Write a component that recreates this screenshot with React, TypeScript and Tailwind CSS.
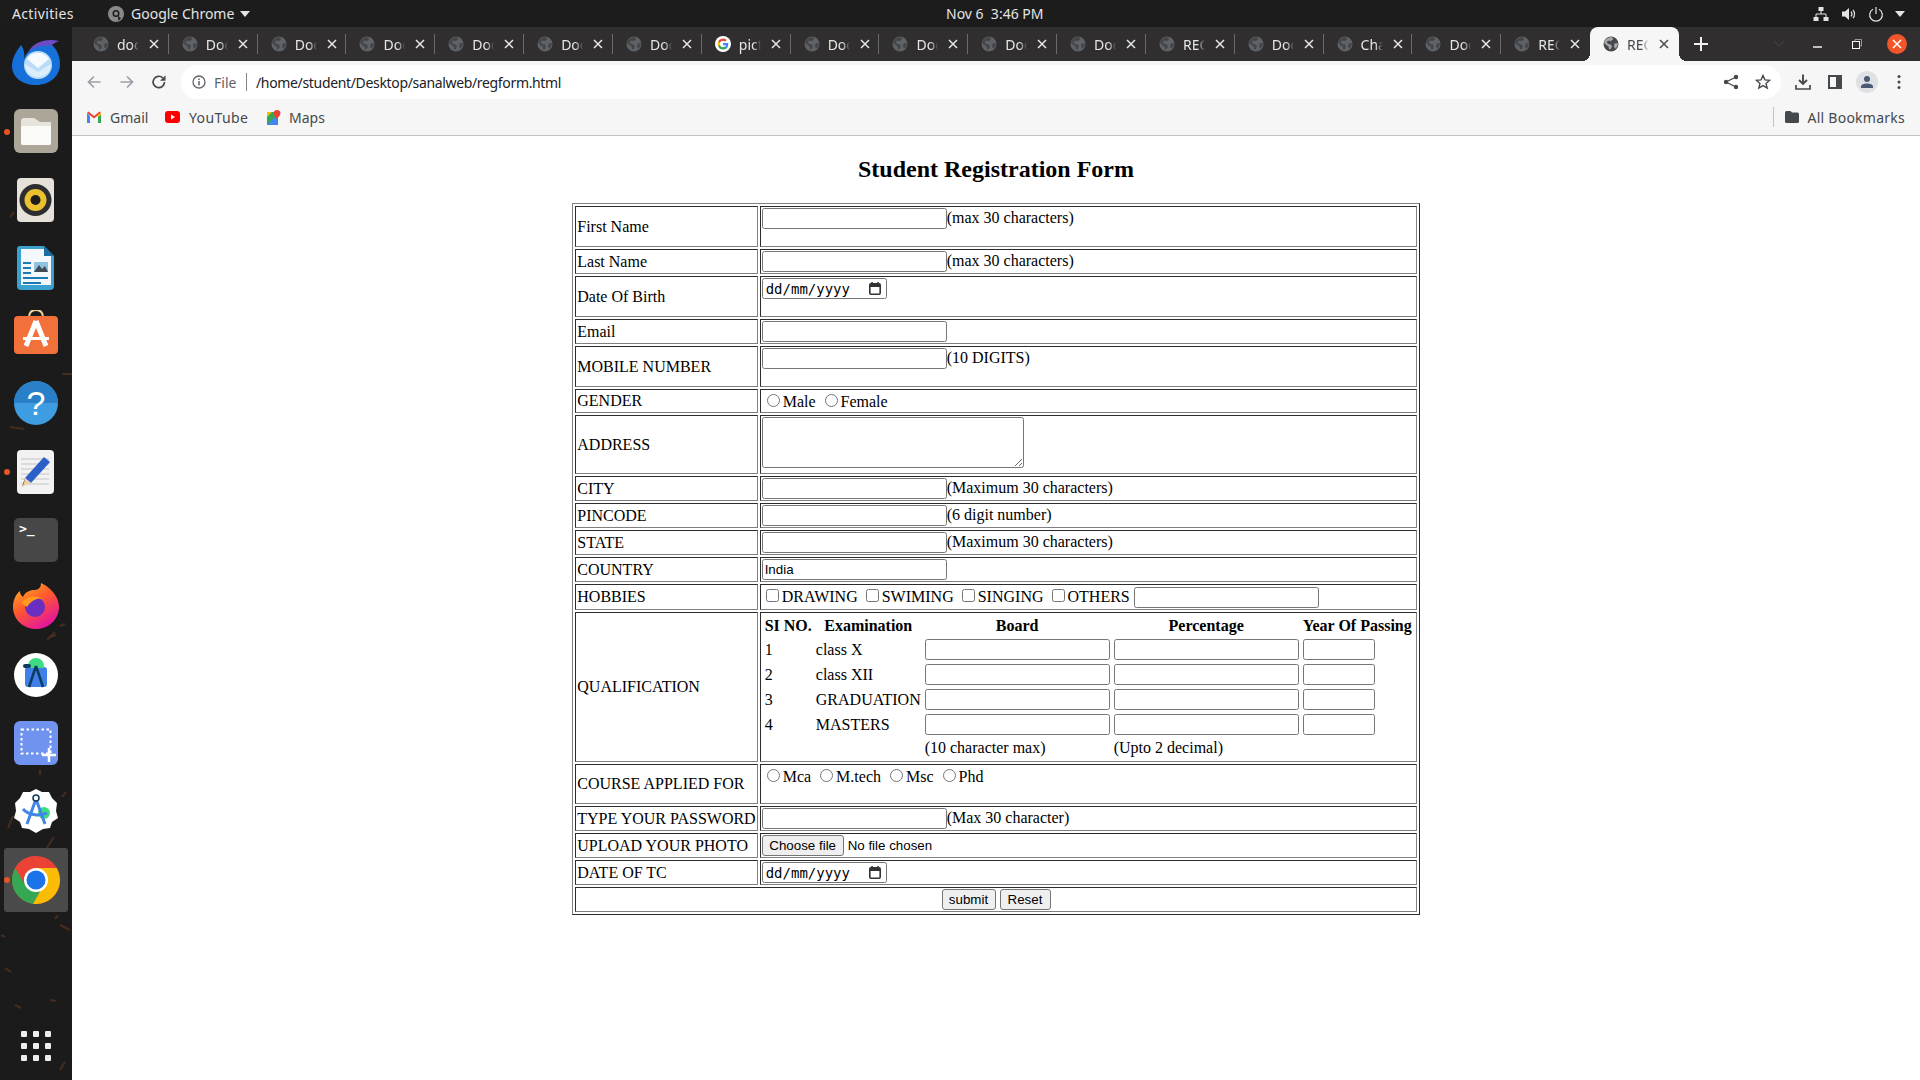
import React from "react";

const ui = "font-['Noto_Sans','Open_Sans',sans-serif]";

function Globe({ active }: { active?: boolean }) {
  const c = active ? "#45494d" : "#5f6368";
  const bg = active ? "#f6f6f6" : "#302e2f";
  return (
    <svg width="16" height="16" viewBox="0 0 16 16" className="shrink-0">
      <circle cx="8" cy="8" r="7.500" fill={c} />
      <path d="M6.500 1.200 L9.500 1.200 L10 3.600 L7.600 5.200 L5.800 4.600 L3.400 6 L5.400 8 L7.800 8.400 L9 10.600 L7.600 13.200 L6.200 13.600 L5.600 10.800 L3.200 8.800 L1 7 C1.400 4.400 3.400 2 6.500 1.200 Z" fill={bg} opacity="0.55" />
      <path d="M11.500 7.500 L14.800 7 L14.600 10 L12.200 12.800 L11 10.200 Z" fill={bg} opacity="0.55" />
    </svg>
  );
}

function GoogleG() {
  return (
    <svg width="16" height="16" viewBox="0 0 16 16" className="shrink-0">
      <circle cx="8" cy="8" r="8" fill="#fff" />
      <path d="M13.200 8.200c0-.4 0-.8-.1-1.100H8v2.100h3a2.600 2.600 0 0 1-1.100 1.700v1.400h1.800c1-1 1.500-2.400 1.500-4.100z" fill="#4285f4" />
      <path d="M8 13.500c1.500 0 2.700-.5 3.700-1.300l-1.800-1.400c-.5.3-1.100.5-1.900.5-1.400 0-2.600-1-3-2.300H3.200v1.400A5.500 5.500 0 0 0 8 13.500z" fill="#34a853" />
      <path d="M5 8.800a3.300 3.300 0 0 1 0-2.100V5.300H3.200a5.500 5.500 0 0 0 0 4.900z" fill="#fbbc05" />
      <path d="M8 4.700c.8 0 1.500.3 2.100.8l1.500-1.500A5.500 5.500 0 0 0 3.200 5.300L5 6.700c.4-1.200 1.600-2 3-2z" fill="#ea4335" />
    </svg>
  );
}

function TabX({ color }: { color: string }) {
  return (
    <svg width="10" height="10" viewBox="0 0 10 10" className="shrink-0">
      <path d="M1 1 L9 9 M9 1 L1 9" stroke={color} strokeWidth="1.500" />
    </svg>
  );
}

const tabs = ["document", "Document", "Document", "Document", "Document", "Document", "Document", "pictures", "Document", "Document", "Document", "Document", "RECORD", "Document", "Chat", "Document", "RECORD", "RECORD"];

function Tab({ title, index }: { title: string; index: number }) {
  const active = index === 17;
  const last = index >= 16;
  if (active) {
    return (
      <div className="relative w-[88.840px] h-[34px] flex items-center pl-[13px] bg-[#f6f6f6] rounded-t-[8px] shrink-0">
        <span className="absolute bottom-0 left-[-8px] w-[8px] h-[8px] bg-[radial-gradient(circle_at_0_0,transparent_8px,#f6f6f6_8px)]" />
        <span className="absolute bottom-0 right-[-8px] w-[8px] h-[8px] bg-[radial-gradient(circle_at_100%_0,transparent_8px,#f6f6f6_8px)]" />
        <Globe active />
        <span className="ml-[8px] w-[22px] overflow-hidden whitespace-nowrap text-[14px] text-[#45494d] [mask-image:linear-gradient(to_right,black_65%,transparent)]">{title}</span>
        <span className="ml-[10px]"><TabX color="#45494d" /></span>
      </div>
    );
  }
  return (
    <div className="w-[88.840px] h-[34px] flex items-center pl-[13px] shrink-0">
      {title === "pictures" ? <GoogleG /> : <Globe />}
      <span className="ml-[8px] w-[22px] overflow-hidden whitespace-nowrap text-[14px] text-[#e6e6e6] [mask-image:linear-gradient(to_right,black_65%,transparent)]">{title}</span>
      <span className="ml-[10px]"><TabX color="#e8e8e8" /></span>
      {!last && <span className="ml-auto w-px h-[20px] bg-[#6b6a6b]" />}
    </div>
  );
}

function TopBar() {
  return (
    <div className={`h-[27px] bg-[#1c1c1c] flex items-center text-[14px] text-[#e4e4e4] shrink-0 ${ui}`}>
      <span className="ml-[12px] w-[62px] tracking-[0.35px]">Activities</span>
      <svg width="18" height="18" viewBox="0 0 18 18" className="ml-[33px]">
        <circle cx="9" cy="9" r="8" fill="#8a8a8a" />
        <circle cx="9" cy="8.500" r="3.500" fill="#1c1c1c" />
        <circle cx="9" cy="8.500" r="2" fill="#8a8a8a" />
        <path d="M11 11 L11.500 16 L14 13 Z" fill="#1c1c1c" />
      </svg>
      <span className="ml-[6px] w-[104px] whitespace-nowrap">Google Chrome</span>
      <svg width="10" height="6" viewBox="0 0 10 6" className="ml-[5px]"><path d="M0 0H10L5 6Z" fill="#e4e4e4" /></svg>
      <span className="ml-[696px] w-[110px] whitespace-nowrap text-[14px]">Nov 6&nbsp;&nbsp;3:46 PM</span>
      <div className="ml-auto flex items-center mr-[15px]">
        <svg width="16" height="16" viewBox="0 0 16 16">
          <rect x="5.500" y="1" width="5" height="4" fill="#e4e4e4" /><rect x="0.500" y="11" width="5" height="4" fill="#e4e4e4" /><rect x="10.500" y="11" width="5" height="4" fill="#e4e4e4" />
          <path d="M8 5V8M3 11V8H13V11" stroke="#e4e4e4" fill="none" />
        </svg>
        <svg width="16" height="16" viewBox="0 0 16 16" className="ml-[12px]">
          <path d="M1 5.500H4L8 2V14L4 10.500H1Z" fill="#e4e4e4" />
          <path d="M10 5.500C11 6.800 11 9.200 10 10.500M12 3.800C14 6 14 10 12 12.200" stroke="#e4e4e4" fill="none" strokeWidth="1.200" />
        </svg>
        <svg width="16" height="16" viewBox="0 0 16 16" className="ml-[11px]">
          <path d="M5 3.300A6.300 6.300 0 1 0 11 3.300M8 1V8" stroke="#e4e4e4" fill="none" strokeWidth="1.200" />
        </svg>
        <svg width="10" height="6" viewBox="0 0 10 6" className="ml-[11px]"><path d="M0 0H10L5 6Z" fill="#e4e4e4" /></svg>
      </div>
    </div>
  );
}

function Toolbar() {
  return (
    <div className={`h-[42px] bg-[#f6f6f6] flex items-center shrink-0 ${ui}`}>
      <svg width="16" height="16" viewBox="0 0 16 16" className="ml-[14px]"><path d="M14.500 8H2.500M8 2.500L2.500 8L8 13.500" stroke="#9aa0a6" strokeWidth="1.700" fill="none" /></svg>
      <svg width="16" height="16" viewBox="0 0 16 16" className="ml-[17px]"><path d="M1.500 8H13.500M8 2.500L13.500 8L8 13.500" stroke="#9aa0a6" strokeWidth="1.700" fill="none" /></svg>
      <svg width="16" height="16" viewBox="0 0 16 16" className="ml-[16px]"><path d="M13.500 8A5.700 5.700 0 1 1 11.800 3.900" stroke="#45494d" strokeWidth="1.700" fill="none" /><path d="M14.500 1.200V6.700H9Z" fill="#45494d" /></svg>
      <div className="ml-[14px] w-[1600px] h-[34px] rounded-full bg-white flex items-center shrink-0">
        <svg width="14" height="14" viewBox="0 0 14 14" className="ml-[11px]"><circle cx="7" cy="7" r="6" stroke="#5f6368" strokeWidth="1.300" fill="none" /><path d="M7 6V10.500M7 3.500V5" stroke="#5f6368" strokeWidth="1.500" /></svg>
        <span className="ml-[8px] text-[14px] text-[#5f6368] w-[24px]">File</span>
        <span className="ml-[8px] w-px h-[18px] bg-[#80868b]" />
        <span className="ml-[9px] text-[14px] text-[#202124] whitespace-nowrap tracking-[-0.340px]">/home/student/Desktop/sanalweb/regform.html</span>
        <svg width="16" height="16" viewBox="0 0 16 16" className="ml-auto"><circle cx="13" cy="3" r="2.200" fill="#45494d" /><circle cx="13" cy="13" r="2.200" fill="#45494d" /><circle cx="3" cy="8" r="2.200" fill="#45494d" /><path d="M13 3L3 8L13 13" stroke="#45494d" strokeWidth="1.300" fill="none" /></svg>
        <svg width="16" height="16" viewBox="0 0 16 16" className="ml-[16px] mr-[10px]"><path d="M8 1.500L9.900 5.900L14.700 6.300L11 9.400L12.200 14.100L8 11.600L3.800 14.100L5 9.400L1.300 6.300L6.100 5.900Z" stroke="#45494d" strokeWidth="1.400" fill="none" /></svg>
      </div>
      <svg width="16" height="16" viewBox="0 0 16 16" className="ml-[14px]"><path d="M8 0.500V9M4 6L8 10L12 6" stroke="#45494d" strokeWidth="1.900" fill="none" /><path d="M1 11V15H15V11" stroke="#45494d" strokeWidth="1.700" fill="none" /></svg>
      <svg width="14" height="14" viewBox="0 0 14 14" className="ml-[17px]"><rect x="0" y="0" width="14" height="14" fill="#45494d" /><rect x="2" y="2" width="6" height="10" fill="#f6f6f6" /></svg>
      <div className="ml-[14px] w-[22px] h-[22px] rounded-full bg-[#dfe1e5] flex items-center justify-center">
        <svg width="14" height="14" viewBox="0 0 14 14"><circle cx="7" cy="4" r="3" fill="#4a5a75" /><path d="M1 13V11.500C1 9.500 4 8.500 7 8.500C10 8.500 13 9.500 13 11.500V13Z" fill="#4a5a75" /></svg>
      </div>
      <svg width="4" height="16" viewBox="0 0 4 16" className="ml-[19px]"><circle cx="2" cy="2.500" r="1.500" fill="#45494d" /><circle cx="2" cy="8" r="1.500" fill="#45494d" /><circle cx="2" cy="13.500" r="1.500" fill="#45494d" /></svg>
    </div>
  );
}

function Bookmarks() {
  return (
    <div className={`h-[33px] pb-[4px] bg-[#f6f6f6] border-b border-[#c4c4c4] flex items-center text-[14px] text-[#45494d] shrink-0 ${ui}`}>
      <svg width="14" height="12" viewBox="0 0 14 12" className="ml-[15px]">
        <path d="M0 2V12H3V5Z" fill="#4285f4" /><path d="M14 2V12H11V5Z" fill="#34a853" />
        <path d="M0 2L1.500 0.500L7 5L12.500 0.500L14 2L7 7.500Z" fill="#ea4335" /><path d="M11 3.500V6L14 3.800V2Z" fill="#fbbc05" />
      </svg>
      <span className="ml-[9px] w-[39px]">Gmail</span>
      <svg width="15" height="12" viewBox="0 0 15 12" className="ml-[16px]"><rect width="15" height="12" rx="3" fill="#f00" /><path d="M6 3.500L10 6L6 8.500Z" fill="#fff" /></svg>
      <span className="ml-[9px] w-[60px] tracking-[0.4px]">YouTube</span>
      <svg width="14" height="15" viewBox="0 0 14 15" className="ml-[18px]">
        <rect y="2" width="11" height="13" fill="#34a853" /><path d="M0 15L11 4V15Z" fill="#4285f4" /><path d="M0 2H5L0 7Z" fill="#fbbc05" />
        <path d="M10 0A3.500 3.500 0 0 1 13.500 3.500C13.500 5.500 11 7 10 9.500C9 7 6.500 5.500 6.500 3.500A3.500 3.500 0 0 1 10 0Z" fill="#ea4335" />
      </svg>
      <span className="ml-[8px]">Maps</span>
      <span className="ml-auto w-px h-[20px] bg-[#c4c4c4]" />
      <svg width="14" height="12" viewBox="0 0 14 12" className="ml-[11px]"><path d="M0 1.500A1.500 1.500 0 0 1 1.500 0H5.500L7 1.500H12.500A1.500 1.500 0 0 1 14 3V10.500A1.500 1.500 0 0 1 12.500 12H1.500A1.500 1.500 0 0 1 0 10.500Z" fill="#45494d" /></svg>
      <span className="ml-[9px] mr-[15px] whitespace-nowrap tracking-[0.25px]">All Bookmarks</span>
    </div>
  );
}

function Chrome48() {
  return (
    <svg width="48" height="48" viewBox="0 0 48 48">
      <circle cx="24" cy="24" r="24" fill="#ea4335" />
      <path d="M3.200 12 A24 24 0 0 0 21 47.800 L33 27 L24 24 Z" fill="#34a853" />
      <path d="M24 12 H44.800 A24 24 0 0 1 21 47.800 L33 27 Z" fill="#fbbc05" />
      <path d="M24 12 A12 12 0 0 0 13.600 30 L3.200 12 A24 24 0 0 1 24 0Z" fill="#ea4335" />
      <circle cx="24" cy="24" r="12" fill="#fff" />
      <circle cx="24" cy="24" r="9.500" fill="#1a73e8" />
    </svg>
  );
}

const dockIcons: { el: React.ReactNode; dot?: boolean; active?: boolean }[] = [
  { el: (
    <svg width="48" height="46" viewBox="0 0 48 46" className="-translate-y-[2px]">
      <path d="M9 6C3 14 0 20 0 27C0 38 10 46 24 46C38 46 48 37 48 25C48 16 44 9 38 4C30 3 22 6 17 12C14 15 13 17 12 20C13 15 12 10 9 6Z" fill="#1670d9" />
      <path d="M17 12C22 3 34 -1 47 2C42 4 40 6 38 7C32 6 24 7 17 12Z" fill="#6a4cc4" />
      <circle cx="26" cy="26" r="14" fill="#b9dcf8" />
      <path d="M15 20C18 15 22 14 26 14C30 14 34 15 37 20L26 29Z" fill="#f5fbff" />
      <path d="M13 25L26 33L39 25C39 33 33 38 26 38C19 38 13 33 13 25Z" fill="#dceefc" />
    </svg>) },
  { dot: true, el: (
    <svg width="44" height="44" viewBox="0 0 44 44" className="-translate-y-[1px]">
      <rect width="44" height="44" rx="6" fill="#aca698" />
      <path d="M7 12A3 3 0 0 1 10 9H20L26 13H37V34A2 2 0 0 1 35 36H9A2 2 0 0 1 7 34Z" fill="#e6e3dc" />
      <path d="M7 17H37V34A2 2 0 0 1 35 36H9A2 2 0 0 1 7 34Z" fill="#fafaf8" />
    </svg>) },
  { el: (
    <svg width="38" height="44" viewBox="0 0 38 44">
      <rect width="37" height="44" rx="4" fill="#e6e2da" />
      <circle cx="18.500" cy="22" r="16" fill="#2e2e30" />
      <circle cx="18.500" cy="22" r="11" fill="#eac12e" />
      <circle cx="18.500" cy="22" r="5" fill="#1d1d1d" />
    </svg>) },
  { el: (
    <svg width="38" height="44" viewBox="0 0 38 44">
      <path d="M3 0H27L37 10V40A4 4 0 0 1 33 44H4A4 4 0 0 1 0 40V3A3 3 0 0 1 3 0Z" fill="#3aa0cf" />
      <path d="M4 3H27V10H34V39H4Z" fill="#f5f8fa" />
      <path d="M27 0L37 10H27Z" fill="#1a6f9e" />
      <path d="M6 16H14V18H6ZM6 21H14V23H6ZM6 26H14V28H6ZM6 31H31V33H6ZM6 36H24V38H6Z" fill="#1a7ab5" />
      <rect x="17" y="16" width="14" height="10" fill="#8fc3e0" />
      <path d="M17 26L22 19L25 23L28 20L31 26Z" fill="#3f4a52" />
    </svg>) },
  { el: (
    <svg width="44" height="44" viewBox="0 0 44 44" className="-translate-y-[4px]">
      <path d="M15 8C15 2 18 0 22 0C26 0 29 2 29 8" stroke="#efcf9d" strokeWidth="2" fill="none" />
      <rect y="6" width="44" height="38" rx="4" fill="#f2703a" />
      <path d="M22 11L12 36M22 11L32 36" stroke="#fff" strokeWidth="5" />
      <rect x="9" y="27" width="26" height="3" fill="#fff" />
    </svg>) },
  { el: (
    <svg width="44" height="44" viewBox="0 0 44 44" className="-translate-y-[1px]">
      <circle cx="22" cy="22" r="22" fill="#3d9de0" />
      <path d="M0 22A22 22 0 0 1 44 22Z" fill="#2a80c8" />
      <text x="22" y="34" textAnchor="middle" fontSize="34" fill="#fff" fontFamily="Liberation Sans">?</text>
    </svg>) },
  { dot: true, el: (
    <svg width="38" height="44" viewBox="0 0 38 44">
      <rect width="37" height="44" rx="4" fill="#f2f2f2" />
      <path d="M4 9H32M4 14H32M4 19H32M4 24H32M4 29H32M4 34H32" stroke="#c4c4c4" />
      <path d="M33 12L14 33L8 28L27 7Z" fill="#2c5fc9" />
      <path d="M14 33L5 37L8 28Z" fill="#eed0a4" />
      <path d="M5 37L8 28L7 33Z" fill="#333" />
    </svg>) },
  { el: (
    <svg width="44" height="44" viewBox="0 0 44 44">
      <rect width="44" height="44" rx="5" fill="#474747" />
      <text x="5" y="15" fontSize="13" fill="#fff" fontFamily="DejaVu Sans Mono" fontWeight="bold">{">_"}</text>
    </svg>) },
  { el: (
    <svg width="46" height="46" viewBox="0 0 46 46" className="-translate-y-[2px]">
      <defs><linearGradient id="ffx" x1="0" y1="0" x2="0.600" y2="1"><stop offset="0" stopColor="#ffc022" /><stop offset="0.500" stopColor="#ff5a2c" /><stop offset="1" stopColor="#e5179c" /></linearGradient></defs>
      <path d="M23 46C10 46 0 36 0 24C0 17 3 11 7 8C7 11 8 12 10 14C12 9 17 7 21 7C24 7 28 6 28 0C35 3 46 12 46 24C46 36 36 46 23 46Z" fill="url(#ffx)" />
      <circle cx="22" cy="24" r="10" fill="#6a2fc0" />
      <path d="M8 20C13 14 22 11 30 16C24 14 18 18 14 24Z" fill="#ff9a1f" />
    </svg>) },
  { el: (
    <svg width="44" height="44" viewBox="0 0 44 44" className="-translate-y-[1px]">
      <circle cx="22" cy="22" r="22" fill="#fff" />
      <rect x="11" y="14" width="22" height="20" rx="3" fill="#3f7fe8" />
      <path d="M14 13A8 8 0 0 1 30 13V15H14Z" fill="#3ddc84" />
      <path d="M22 13L15 34M22 13L29 34" stroke="#0d3b5e" strokeWidth="2.500" />
      <rect x="9" y="11" width="8" height="4" rx="2" fill="#0d3b5e" />
    </svg>) },
  { el: (
    <svg width="44" height="44" viewBox="0 0 44 44" className="-translate-y-[1px]">
      <rect width="44" height="44" rx="6" fill="#6f93ee" />
      <rect x="7.500" y="8.500" width="29" height="24" fill="none" stroke="#fff" strokeWidth="2" strokeDasharray="2.500 2.500" />
      <path d="M35 27V41M28 34H42" stroke="#fff" strokeWidth="2.500" />
    </svg>) },
  { el: (
    <svg width="44" height="44" viewBox="0 0 44 44" className="-translate-y-[1px]">
      <path d="M22 0L28 3L35 3L38 9L43 14L42 22L44 29L38 33L36 39L29 40L22 44L15 40L8 39L6 33L0 29L2 22L1 14L6 9L9 3L16 3Z" fill="#fff" />
      <circle cx="30" cy="24" r="6" fill="#3ddc84" />
      <path d="M22 10L13 35M22 10L31 35M9 20C15 27 27 27 33 24" stroke="#4285e8" strokeWidth="3" fill="none" />
      <circle cx="22" cy="9" r="3" fill="#fff" stroke="#0d3b5e" strokeWidth="1.500" />
    </svg>) },
  { dot: true, active: true, el: <Chrome48 /> },
];

function Wallpaper() {
  const specks: [number, number, number, number][] = [
    [10, 217, 4, -5], [62, 374, 11, 0], [10, 427, 14, 2], [50, 637, 6, -2], [47, 640, 8, -8], [60, 626, 5, -2], [8, 828, 5, -12], [40, 770, 0, 5],
    [66, 792, -4, 5], [54, 837, -8, 12], [60, 925, 10, 5], [58, 915, -3, 4], [1, 935, 4, 2], [50, 1000, 6, 1], [5, 968, 6, 4], [60, 1070, 5, -8], [15, 1005, 6, 3],
  ];
  return (
    <svg className="absolute inset-0" width="72" height="1053" viewBox="0 27 72 1053">
      {specks.map(([x, y, dx, dy], i) => (
        <path key={i} d={`M${x} ${y}l${dx} ${dy}`} stroke="#5a3420" strokeWidth="2" opacity="0.7" />
      ))}
    </svg>
  );
}

function Dock() {
  return (
    <div className="relative w-[72px] shrink-0 bg-[#1b1b1c] flex flex-col items-center overflow-hidden">
      <Wallpaper />
      <div className="relative flex flex-col items-center pt-[3px]">
        {dockIcons.map((d, i) => (
          <div key={i} className="relative w-[72px] h-[68px] flex items-center justify-center">
            {d.active && <span className="absolute left-[4px] right-[4px] top-[2px] bottom-[2px] bg-[#4a4a4a] rounded-[3px]" />}
            {d.dot && <span className="absolute left-[4px] top-[31px] w-[6px] h-[6px] rounded-full bg-[#e95420] z-10" />}
            <span className="relative">{d.el}</span>
          </div>
        ))}
      </div>
      <div className="relative mt-auto mb-[19px] grid grid-cols-3 gap-x-[6px] gap-y-[6px]">
        {Array.from({ length: 9 }).map((_, i) => (
          <span key={i} className="w-[6px] h-[6px] rounded-[1px] bg-[#eeeeee]" />
        ))}
      </div>
    </div>
  );
}

const td = "border border-[#808080] [border-style:inset] p-px";
const txt = "w-[185px] h-[21px] border border-[#767676] rounded-[2.500px] bg-white px-[2px] py-px text-[13.333px] font-['Liberation_Sans',sans-serif] text-black";
const radio = "mt-[3px] mr-[3px] mb-0 ml-[5px]";
const check = "mt-[3px] mr-[3px] mb-[3px] ml-[4px]";
const btn = "h-[21px] border border-[#767676] rounded-[3px] bg-[#efefef] text-[13.333px] font-['Liberation_Sans',sans-serif] text-black";

function Blank() {
  return <span className="block h-[16px]" />;
}

function DateBox() {
  return (
    <span className="inline-flex items-center w-[125px] h-[21px] border border-[#767676] rounded-[2.500px] bg-white pl-[3px] pr-[4px] text-[14px] font-['DejaVu_Sans_Mono',monospace] text-black">
      dd/mm/yyyy
      <svg width="12" height="13" viewBox="0 0 12 13" className="ml-auto mr-[1px]">
        <path d="M3 0V2M9 0V2" stroke="#333" strokeWidth="1.500" />
        <rect x="0.800" y="1.800" width="10.400" height="10.400" rx="1.200" fill="none" stroke="#333" strokeWidth="1.600" />
        <rect x="1" y="2" width="10" height="3" fill="#333" />
      </svg>
    </span>
  );
}

function Row({ label, children }: { label: string; children: React.ReactNode }) {
  return (
    <tr>
      <td className={td}>{label}</td>
      <td className={td}>{children}</td>
    </tr>
  );
}

function Qualification() {
  const rows = [["1", "class X"], ["2", "class XII"], ["3", "GRADUATION"], ["4", "MASTERS"]];
  const small = "w-[72px] h-[21px] border border-[#767676] rounded-[2.500px] bg-white px-[2px] py-px text-[13.333px] font-['Liberation_Sans',sans-serif]";
  return (
    <table className="border-separate border-spacing-[2px]">
      <tbody>
        <tr>
          <th className="p-px">SI NO.</th>
          <th className="p-px">Examination</th>
          <th className="p-px">Board</th>
          <th className="p-px">Percentage</th>
          <th className="p-px">Year Of Passing</th>
        </tr>
        {rows.map(([n, name]) => (
          <tr key={n}>
            <td className="p-px">{n}</td>
            <td className="p-px">{name}</td>
            <td className="p-px"><input type="text" className={txt} /></td>
            <td className="p-px"><input type="text" className={txt} /></td>
            <td className="p-px"><input type="text" className={small} /></td>
          </tr>
        ))}
        <tr>
          <td className="p-px" colSpan={2}></td>
          <td className="p-px">(10 character max)</td>
          <td className="p-px">(Upto 2 decimal)</td>
          <td className="p-px"></td>
        </tr>
      </tbody>
    </table>
  );
}

function Form() {
  return (
    <div className="flex-1 bg-white font-['Liberation_Serif',serif] text-[16px] leading-[normal] text-black flex flex-col items-center">
      <h2 className="text-[24px] font-bold mt-[20px] mb-[20px] leading-[27px]">Student Registration Form</h2>
      <table className="border border-[#808080] [border-style:outset] border-separate border-spacing-[2px]">
        <tbody>
          <Row label="First Name"><input type="text" className={txt} />(max 30 characters)<Blank /></Row>
          <Row label="Last Name"><input type="text" className={txt} />(max 30 characters)</Row>
          <Row label="Date Of Birth"><DateBox /><Blank /></Row>
          <Row label="Email"><input type="text" className={txt} /></Row>
          <Row label="MOBILE NUMBER"><input type="text" className={txt} />(10 DIGITS)<Blank /></Row>
          <Row label="GENDER">
            <input type="radio" name="g" className={radio} />Male <input type="radio" name="g" className={radio} />Female
          </Row>
          <Row label="ADDRESS"><textarea className={txt + " !w-[262px] !h-[51px]"} /></Row>
          <Row label="CITY"><input type="text" className={txt} />(Maximum 30 characters)</Row>
          <Row label="PINCODE"><input type="text" className={txt} />(6 digit number)</Row>
          <Row label="STATE"><input type="text" className={txt} />(Maximum 30 characters)</Row>
          <Row label="COUNTRY"><input type="text" className={txt} defaultValue="India" /></Row>
          <Row label="HOBBIES">
            <input type="checkbox" className={check} />DRAWING <input type="checkbox" className={check} />SWIMING <input type="checkbox" className={check} />SINGING <input type="checkbox" className={check} />OTHERS <input type="text" className={txt} />
          </Row>
          <Row label="QUALIFICATION"><Qualification /></Row>
          <Row label="COURSE APPLIED FOR">
            <input type="radio" name="c" className={radio} />Mca <input type="radio" name="c" className={radio} />M.tech <input type="radio" name="c" className={radio} />Msc <input type="radio" name="c" className={radio} />Phd<Blank />
          </Row>
          <Row label="TYPE YOUR PASSWORD"><input type="password" className={txt} />(Max 30 character)</Row>
          <Row label="UPLOAD YOUR PHOTO">
            <span className="inline-flex items-center h-[21px] text-[13.333px] font-['Liberation_Sans',sans-serif]">
              <button type="button" className={btn + " w-[82px]"}>Choose file</button>
              <span className="ml-[4px]">No file chosen</span>
            </span>
          </Row>
          <Row label="DATE OF TC"><DateBox /></Row>
          <tr>
            <td colSpan={2} className={td + " text-center"}>
              <input type="submit" value="submit" className={btn + " w-[54px]"} /> <input type="reset" value="Reset" className={btn + " w-[51px]"} />
            </td>
          </tr>
        </tbody>
      </table>
    </div>
  );
}

export default function App() {
  return (
    <div className="w-[1920px] h-[1080px] flex flex-col overflow-hidden bg-white">
      <TopBar />
      <div className="flex-1 flex min-h-0">
        <Dock />
        <div className="flex-1 flex flex-col min-w-0">
          <div className={`h-[34px] bg-[#302e2f] flex items-end pl-[8px] relative shrink-0 ${ui}`}>
            {tabs.map((t, i) => <Tab key={i} title={t} index={i} />)}
            <svg width="16" height="16" viewBox="0 0 16 16" className="ml-[14px] self-center"><path d="M8 1V15M1 8H15" stroke="#f0f0f0" strokeWidth="2" /></svg>
            <svg width="12" height="8" viewBox="0 0 12 8" className="ml-[64px] self-center"><path d="M1 1L6 6L11 1" stroke="#3f3e3f" strokeWidth="1.500" fill="none" /></svg>
            <svg width="9" height="9" viewBox="0 0 9 9" className="ml-[28px] self-center"><path d="M0 7H9" stroke="#fff" strokeWidth="1.400" /></svg>
            <svg width="10" height="10" viewBox="0 0 10 10" className="ml-[30px] self-center"><rect x="0.500" y="2.500" width="7" height="7" fill="none" stroke="#fff" /><path d="M3 2.500V0.500H9.500V7H7.500" fill="none" stroke="#999" /></svg>
            <span className="ml-[25px] self-center w-[20px] h-[20px] rounded-full bg-[#f0562a] flex items-center justify-center">
              <TabX color="#ffffff" />
            </span>
          </div>
          <Toolbar />
          <Bookmarks />
          <Form />
        </div>
      </div>
    </div>
  );
}
